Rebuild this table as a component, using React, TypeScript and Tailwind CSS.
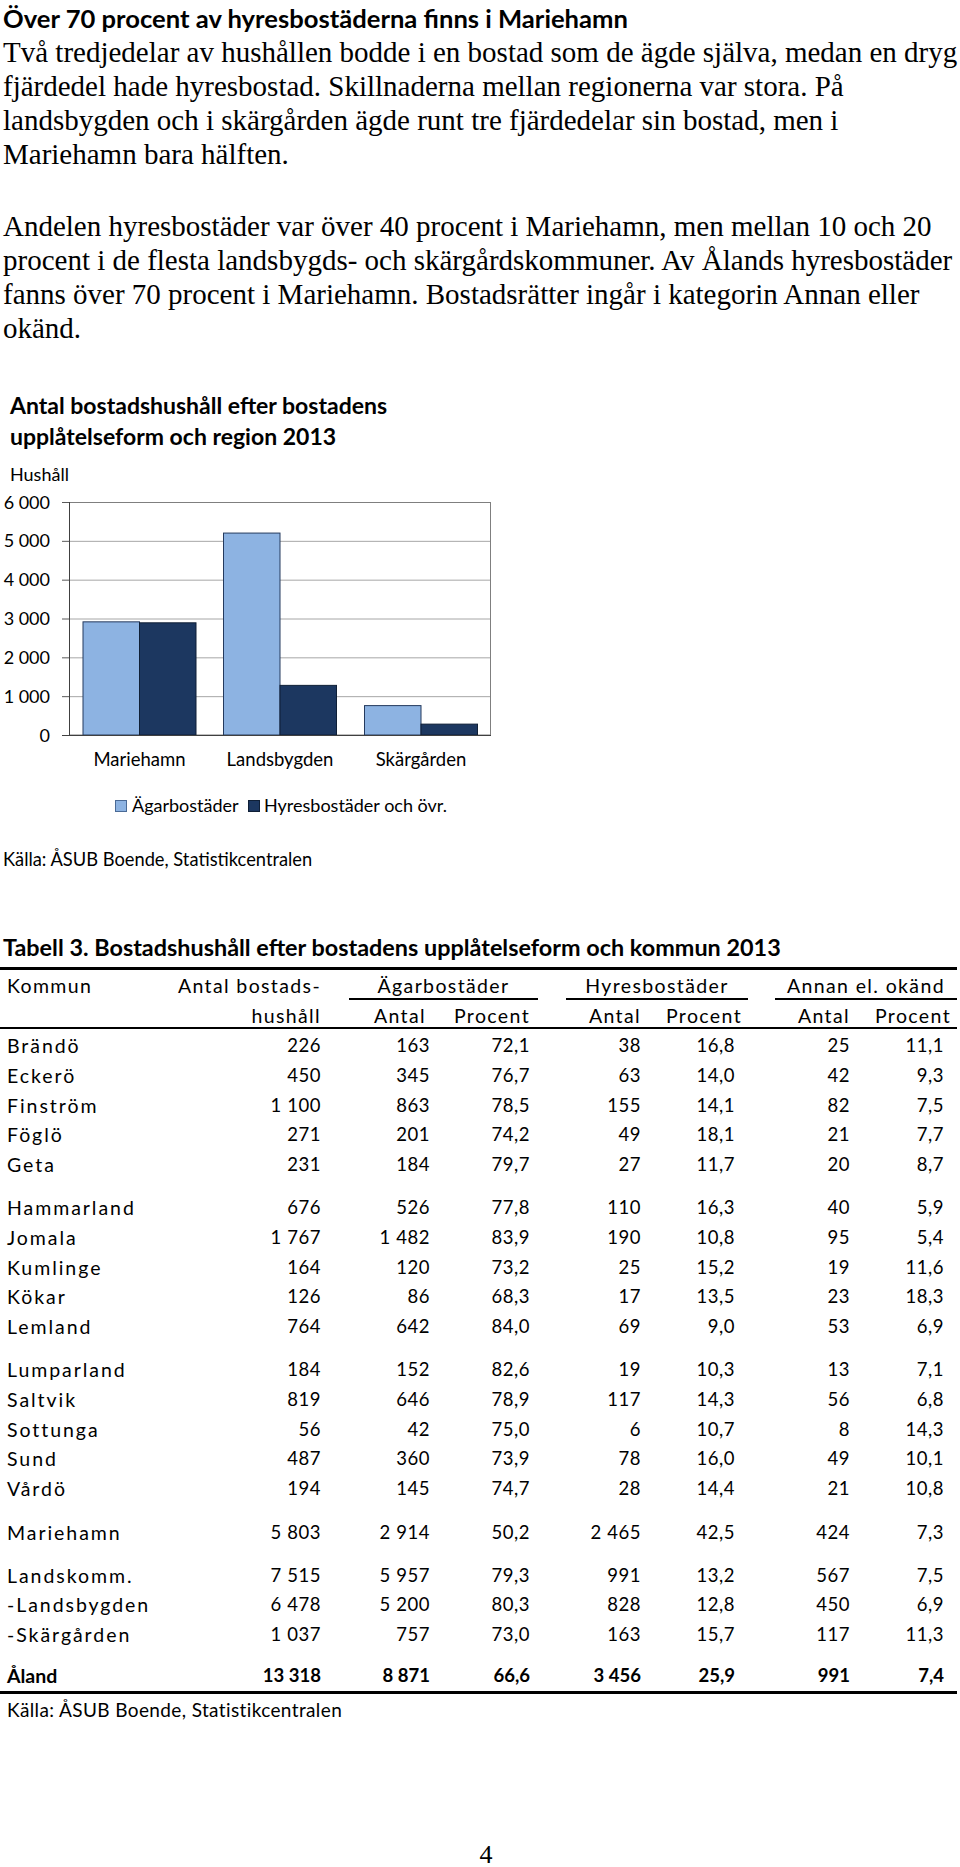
import React from "react";

const sans = "font-['Lato','Open_Sans',sans-serif]";
const serif = "font-['Liberation_Serif','Times_New_Roman',serif]";

type Row = [string, string, string, string, string, string, string, string];

const groups: Row[][] = [
    [
        ["Brändö", "226", "163", "72,1", "38", "16,8", "25", "11,1"],
        ["Eckerö", "450", "345", "76,7", "63", "14,0", "42", "9,3"],
        ["Finström", "1 100", "863", "78,5", "155", "14,1", "82", "7,5"],
        ["Föglö", "271", "201", "74,2", "49", "18,1", "21", "7,7"],
        ["Geta", "231", "184", "79,7", "27", "11,7", "20", "8,7"],
    ],
    [
        ["Hammarland", "676", "526", "77,8", "110", "16,3", "40", "5,9"],
        ["Jomala", "1 767", "1 482", "83,9", "190", "10,8", "95", "5,4"],
        ["Kumlinge", "164", "120", "73,2", "25", "15,2", "19", "11,6"],
        ["Kökar", "126", "86", "68,3", "17", "13,5", "23", "18,3"],
        ["Lemland", "764", "642", "84,0", "69", "9,0", "53", "6,9"],
    ],
    [
        ["Lumparland", "184", "152", "82,6", "19", "10,3", "13", "7,1"],
        ["Saltvik", "819", "646", "78,9", "117", "14,3", "56", "6,8"],
        ["Sottunga", "56", "42", "75,0", "6", "10,7", "8", "14,3"],
        ["Sund", "487", "360", "73,9", "78", "16,0", "49", "10,1"],
        ["Vårdö", "194", "145", "74,7", "28", "14,4", "21", "10,8"],
    ],
    [["Mariehamn", "5 803", "2 914", "50,2", "2 465", "42,5", "424", "7,3"]],
    [
        ["Landskomm.", "7 515", "5 957", "79,3", "991", "13,2", "567", "7,5"],
        ["-Landsbygden", "6 478", "5 200", "80,3", "828", "12,8", "450", "6,9"],
        ["-Skärgården", "1 037", "757", "73,0", "163", "15,7", "117", "11,3"],
    ],
];

const groupGap = ["", "mt-[13.25px]", "mt-[13.25px]", "mt-[14px]", "mt-[13px]"];

const cols = "grid grid-cols-[170px_151px_109px_100px_111px_94px_115px_94px]";
const head = "text-[19.5px] tracking-[0.07em] pt-[4px] leading-[24px]";

// chart geometry (svg coords, svg top sits at page y 452)
const y0 = 283;
const perK = 233 / 6000;
const yOf = (v: number) => y0 - v * perK;

const bars = [
    { label: "Mariehamn", cx: 139.5, own: 2914, rent: 2889 },
    { label: "Landsbygden", cx: 280, own: 5200, rent: 1278 },
    { label: "Skärgården", cx: 421, own: 757, rent: 280 },
];

export default function App() {
    return (
        <div className="w-[960px] min-h-[1867px] bg-white text-black pt-[3px] overflow-hidden">
            {/* ── Intro ─────────────────────────────── */}
            <h1 className={`${sans} pl-[3px] text-[25.6px] leading-[30px] font-bold whitespace-nowrap`}>
                Över 70 procent av hyresbostäderna finns i Mariehamn
            </h1>

            <div className={`${serif} pl-[3px] mt-[2px] text-[29px] leading-[34px] whitespace-nowrap`}>
                <p>Två tredjedelar av hushållen bodde i en bostad som de ägde själva, medan en dryg</p>
                <p>fjärdedel hade hyresbostad. Skillnaderna mellan regionerna var stora. På</p>
                <p>landsbygden och i skärgården ägde runt tre fjärdedelar sin bostad, men i</p>
                <p>Mariehamn bara hälften.</p>
            </div>

            <div className={`${serif} pl-[3px] mt-[38px] text-[29px] leading-[34px] whitespace-nowrap`}>
                <p>Andelen hyresbostäder var över 40 procent i Mariehamn, men mellan 10 och 20</p>
                <p>procent i de flesta landsbygds- och skärgårdskommuner. Av Ålands hyresbostäder</p>
                <p>fanns över 70 procent i Mariehamn. Bostadsrätter ingår i kategorin Annan eller</p>
                <p>okänd.</p>
            </div>

            {/* ── Chart ─────────────────────────────── */}
            <div className={`${sans} pl-[10px] mt-[45px] text-[23px] leading-[31px] font-bold`}>
                <p>Antal bostadshushåll efter bostadens</p>
                <p>upplåtelseform och region 2013</p>
            </div>

            <svg width="500" height="378" viewBox="0 0 500 378" className="block" fontFamily="Lato, 'Open Sans', sans-serif" fontSize="18">
                <text x="10" y="29" fill="#000">Hushåll</text>
                {[0, 1000, 2000, 3000, 4000, 5000, 6000].map((v) => (
                    <g key={v}>
                        <text x="50" y={yOf(v) + 6.5} textAnchor="end" fill="#000">
                            {v === 0 ? "0" : `${v / 1000} 000`}
                        </text>
                        <line x1="62" x2="69" y1={yOf(v) + 0.5} y2={yOf(v) + 0.5} stroke="#595959" />
                        {v > 0 && v < 6000 && (
                            <line x1="69" x2="491" y1={yOf(v) + 0.5} y2={yOf(v) + 0.5} stroke="#a6a6a6" />
                        )}
                    </g>
                ))}
                <rect x="69.5" y="50.5" width="421" height="232.5" fill="none" stroke="#7f7f7f" />
                {bars.map((b) => (
                    <g key={b.label}>
                        <rect x={b.cx - 56.5} y={yOf(b.own)} width="56.5" height={b.own * perK} fill="#8db3e2" stroke="#243a5e" strokeWidth="1" />
                        <rect x={b.cx} y={yOf(b.rent)} width="56.5" height={b.rent * perK} fill="#1c3760" stroke="#0f1f36" strokeWidth="1" />
                        <text x={b.cx} y="314" textAnchor="middle" fontSize="18.5" fill="#000">{b.label}</text>
                    </g>
                ))}
                <line x1="69.5" x2="69.5" y1="50" y2="283.5" stroke="#404040" />
                <line x1="62" x2="491" y1="283.5" y2="283.5" stroke="#404040" />
                {/* legend */}
                <rect x="115.5" y="348.5" width="11" height="11" fill="#8db3e2" stroke="#4a6a96" />
                <text x="132" y="360" fill="#000">Ägarbostäder</text>
                <rect x="248.5" y="348.5" width="11" height="11" fill="#1c3760" stroke="#0f1f36" />
                <text x="264" y="360" fill="#000">Hyresbostäder och övr.</text>
            </svg>

            <p className={`${sans} pl-[3px] mt-[17px] text-[18.3px] leading-[24px]`}>
                Källa: ÅSUB Boende, Statistikcentralen
            </p>

            {/* ── Table ─────────────────────────────── */}
            <h2 className={`${sans} pl-[3px] mt-[62px] text-[23.4px] leading-[28px] font-bold whitespace-nowrap`}>
                Tabell 3. Bostadshushåll efter bostadens upplåtelseform och kommun 2013
            </h2>

            <div className={`${sans} mt-[6px] w-[957px] border-t-[3px] border-black text-[18.5px] tracking-[0.03em]`}>
                <div className="grid grid-cols-[170px_151px_28px_189px_28px_182px_27px_182px] h-[30px]">
                    <span className={`pl-[7px] ${head}`}>Kommun</span>
                    <span className={`text-right ${head}`}>Antal bostads-</span>
                    <span />
                    <span className={`text-center border-b-2 border-black ${head}`}>Ägarbostäder</span>
                    <span />
                    <span className={`text-center border-b-2 border-black ${head}`}>Hyresbostäder</span>
                    <span />
                    <span className={`text-center border-b-2 border-black ${head}`}>Annan el. okänd</span>
                </div>
                <div className={`${cols} h-[29px] border-b-2 border-black`}>
                    <span />
                    <span className={`text-right ${head}`}>hushåll</span>
                    <span className={`text-right pr-[4px] ${head}`}>Antal</span>
                    <span className={`text-right ${head}`}>Procent</span>
                    <span className={`text-right ${head}`}>Antal</span>
                    <span className={`text-right -mr-[7px] ${head}`}>Procent</span>
                    <span className={`text-right ${head}`}>Antal</span>
                    <span className={`text-right -mr-[7px] ${head}`}>Procent</span>
                </div>

                <div className="pt-[2px]">
                    {groups.map((g, gi) => (
                        <div key={gi} className={groupGap[gi]}>
                            {g.map((r) => (
                                <div key={r[0]} className={`${cols} leading-[29.75px]`}>
                                    <span className="pl-[7px] text-[19.5px] tracking-[0.1em]">{r[0]}</span>
                                    {r.slice(1).map((c, ci) => (
                                        <span key={ci} className="text-right">{c}</span>
                                    ))}
                                </div>
                            ))}
                        </div>
                    ))}
                    <div className={`${cols} mt-[11px] leading-[29.75px] font-bold tracking-normal border-b-[3px] border-black`}>
                        {["Åland", "13 318", "8 871", "66,6", "3 456", "25,9", "991", "7,4"].map((c, ci) => (
                            <span key={ci} className={ci === 0 ? "pl-[7px] text-[19.5px]" : "text-right"}>{c}</span>
                        ))}
                    </div>
                </div>
            </div>

            <p className={`${sans} pl-[7px] mt-[4px] text-[19px] tracking-[0.02em] leading-[24px]`}>
                Källa: ÅSUB Boende, Statistikcentralen
            </p>

            <p className={`${serif} mt-[116px] text-center pl-[12px] text-[26px] leading-[34px]`}>4</p>
        </div>
    );
}
